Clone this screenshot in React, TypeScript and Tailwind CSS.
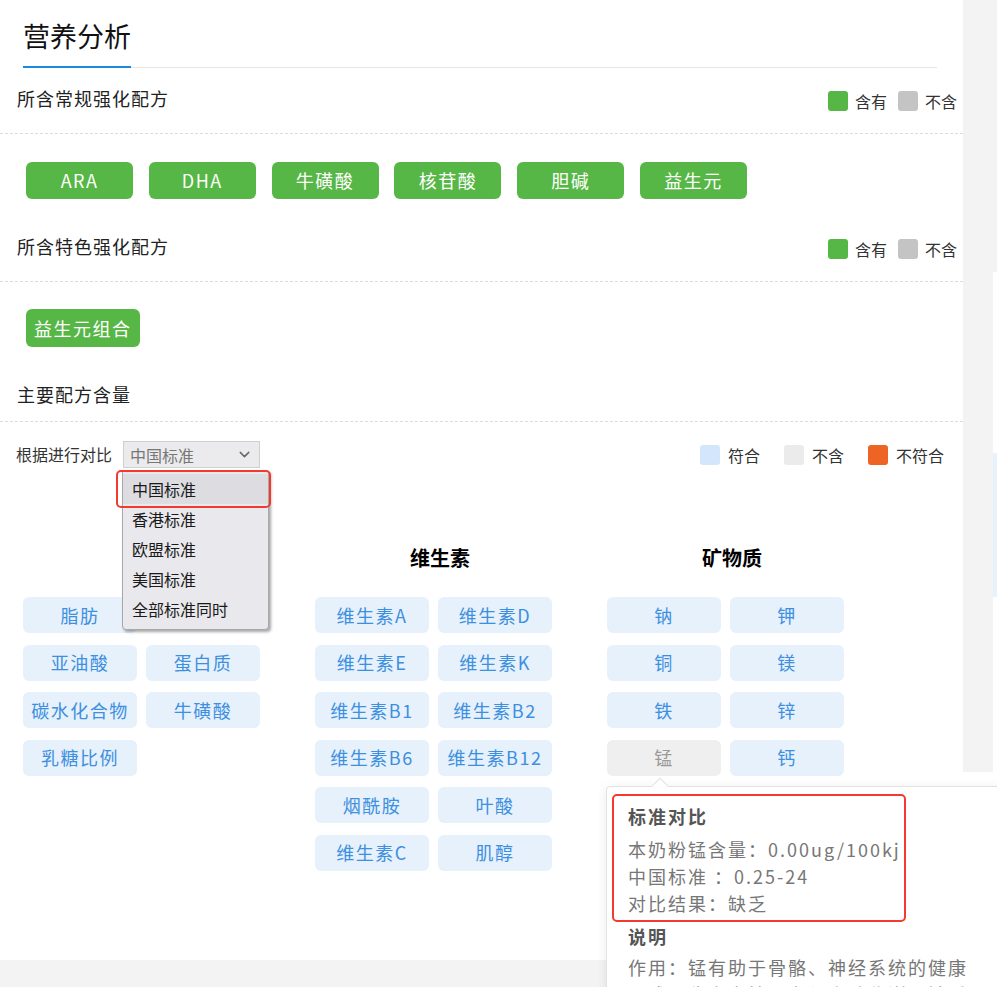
import { ChevronDown } from "lucide-react";

const regular = ["ARA", "DHA", "牛磺酸", "核苷酸", "胆碱", "益生元"];

const columns: { title: string; tags: (string | null)[] }[] = [
  { title: "", tags: ["脂肪", null, "亚油酸", "蛋白质", "碳水化合物", "牛磺酸", "乳糖比例"] },
  {
    title: "维生素",
    tags: ["维生素A", "维生素D", "维生素E", "维生素K", "维生素B1", "维生素B2", "维生素B6", "维生素B12", "烟酰胺", "叶酸", "维生素C", "肌醇"],
  },
  { title: "矿物质", tags: ["钠", "钾", "铜", "镁", "铁", "锌", "锰", "钙"] },
];

const options = ["中国标准", "香港标准", "欧盟标准", "美国标准", "全部标准同时"];

function Legend() {
  return (
    <div className="mt-[1px] flex items-center text-[16px] leading-[20px] text-[#333]">
      <span className="h-[20px] w-[20px] rounded-[3px] bg-[#57b746]" />
      <span className="ml-[7px]">含有</span>
      <span className="ml-[11px] h-[20px] w-[20px] rounded-[3px] bg-[#c4c4c4]" />
      <span className="ml-[7px]">不含</span>
    </div>
  );
}

function SectionHeader({ title, legend = true, tall = true }: { title: string; legend?: boolean; tall?: boolean }) {
  return (
    <div
      className={`flex items-center justify-between border-b border-dashed border-[#dcdcdc] pl-[17px] pr-[6px] ${
        tall ? "h-[66px]" : "h-[56px]"
      }`}
    >
      <span className={`text-[18px] leading-[26px] tracking-[1px] text-[#222] ${tall ? "mb-[5px]" : ""}`}>{title}</span>
      {legend && <Legend />}
    </div>
  );
}

function GreenTag({ label, wide }: { label: string; wide?: boolean }) {
  return (
    <span
      className={`flex items-center justify-center rounded-[6px] bg-[#57b746] text-[18px] tracking-[1.5px] text-white ${
        wide ? "h-[38px] px-[8px]" : "h-[37px] w-[107px]"
      }`}
    >
      {label}
    </span>
  );
}

export default function App() {
  return (
    <div className="relative h-[987px] w-[997px] overflow-hidden bg-white font-['Noto_Sans_CJK_SC',sans-serif]">
      <div className="flex h-full">
        <div className="flex w-[963px] flex-col">
          <main className="h-[960px] bg-white">
            {/* title */}
            <div className="ml-[23px] mr-[26px] flex h-[68px] items-end border-b border-[#e6e6e6]">
              <span className="-mb-px border-b-2 border-[#1a8be0] pb-[8px] text-[27px] leading-[44px] text-[#111]">
                营养分析
              </span>
            </div>

            <SectionHeader title="所含常规强化配方" />
            <div className="flex h-[82px] gap-[15.8px] pl-[26px] pt-[28px]">
              {regular.map((t) => (
                <GreenTag key={t} label={t} />
              ))}
            </div>

            <SectionHeader title="所含特色强化配方" />
            <div className="flex h-[84px] pl-[26px] pt-[27px]">
              <GreenTag label="益生元组合" wide />
            </div>

            <SectionHeader title="主要配方含量" legend={false} tall={false} />

            {/* compare row */}
            <div className="flex items-center justify-between pl-[16px] pr-[19px] pt-[19px]">
              <div className="flex items-center">
                <span className="text-[16px] leading-[27px] text-[#333]">根据进行对比</span>
                <div className="ml-[11px] flex h-[27px] w-[137px] items-center justify-between border border-[#cfcfcf] bg-[#ebebed] pl-[6px] pr-[6px] text-[16px] text-[#777]">
                  <span>中国标准</span>
                  <ChevronDown size={17} strokeWidth={2} className="text-[#666]" />
                </div>
              </div>
              <div className="flex items-center text-[16px] leading-[20px] text-[#333]">
                <span className="h-[20px] w-[20px] rounded-[3px] bg-[#d4e6fb]" />
                <span className="ml-[8px]">符合</span>
                <span className="ml-[24px] h-[20px] w-[20px] rounded-[3px] bg-[#ebebeb]" />
                <span className="ml-[8px]">不含</span>
                <span className="ml-[24px] h-[20px] w-[20px] rounded-[3px] bg-[#ee6424]" />
                <span className="ml-[8px]">不符合</span>
              </div>
            </div>

            {/* columns */}
            <div className="mt-[75px] grid grid-cols-[250px_250px_250px] gap-x-[42px] pl-[23px]">
              {columns.map((col, i) => (
                <div key={i}>
                  <div className="h-[30px] text-center text-[20px] font-bold leading-[30px] text-black">{col.title}</div>
                  <div className="mt-[24px] grid grid-cols-[114px_114px] gap-x-[9px] gap-y-[11.6px]">
                    {col.tags.map((t, j) =>
                      t === null ? (
                        <div key={j} className="h-[36px]" />
                      ) : (
                        <div
                          key={j}
                          className={`flex h-[36px] items-center justify-center rounded-[6px] text-[18px] tracking-[1.5px] ${
                            t === "锰" ? "bg-[#efefef] text-[#9a9a9a]" : "bg-[#e6f1fc] text-[#3d8fe0]"
                          }`}
                        >
                          {t}
                        </div>
                      )
                    )}
                  </div>
                </div>
              ))}
            </div>
          </main>
          <div className="flex-1 bg-[#f3f3f3]" />
        </div>
        <div className="h-[772px] w-[30px] bg-[#f3f3f3]" />
        <div className="flex w-[4px] flex-col">
          <div className="h-[272px] bg-[#f3f3f3]" />
          <div className="h-[181px] bg-white" />
          <div className="h-[144px] bg-[#e8f2fd]" />
        </div>
      </div>

      {/* dropdown list */}
      <div className="absolute left-[122px] top-[471px] h-[159px] w-[147px] rounded-b-[4px] border border-[#a8a8a8] bg-[#e9e8ec] pt-[2px] shadow-[2px_2px_3px_rgba(0,0,0,0.35)]">
        {options.map((o, i) => (
          <div
            key={o}
            className={`h-[30px] px-[9px] text-[16px] leading-[30px] text-[#1a1a1a] ${i === 0 ? "bg-[#dddce1]" : ""}`}
          >
            {o}
          </div>
        ))}
      </div>
      <div className="absolute left-[116px] top-[470px] h-[38px] w-[155px] rounded-[5px] border-2 border-[#f23a2f]" />

      {/* popover */}
      <div className="absolute left-[606px] top-[786px] h-[240px] w-[420px] rounded-[4px] border border-[#e2e2e2] bg-white pl-[21px] pt-[16px] shadow-[0_2px_12px_rgba(0,0,0,0.08)]">
        <div className="absolute -top-[7px] left-[47px] h-[12px] w-[12px] rotate-45 border-l border-t border-[#e2e2e2] bg-white" />
        <div className="w-[350px] text-[18px] leading-[27px] tracking-[2px] text-[#777]">
          <p className="font-bold text-[#555]">标准对比</p>
          <p className="mt-[6px]">本奶粉锰含量：0.00ug/100kj</p>
          <p>中国标准 ：0.25-24</p>
          <p>对比结果：缺乏</p>
          <p className="mt-[6px] font-bold text-[#555]">说明</p>
          <p className="mt-[4px]">作用：锰有助于骨骼、神经系统的健康形成，稳定血糖，参与脂肪代谢，缺乏会影响生长发育。</p>
        </div>
      </div>
      <div className="absolute left-[612px] top-[794px] h-[128px] w-[294px] rounded-[5px] border-2 border-[#f23a2f]" />
    </div>
  );
}
